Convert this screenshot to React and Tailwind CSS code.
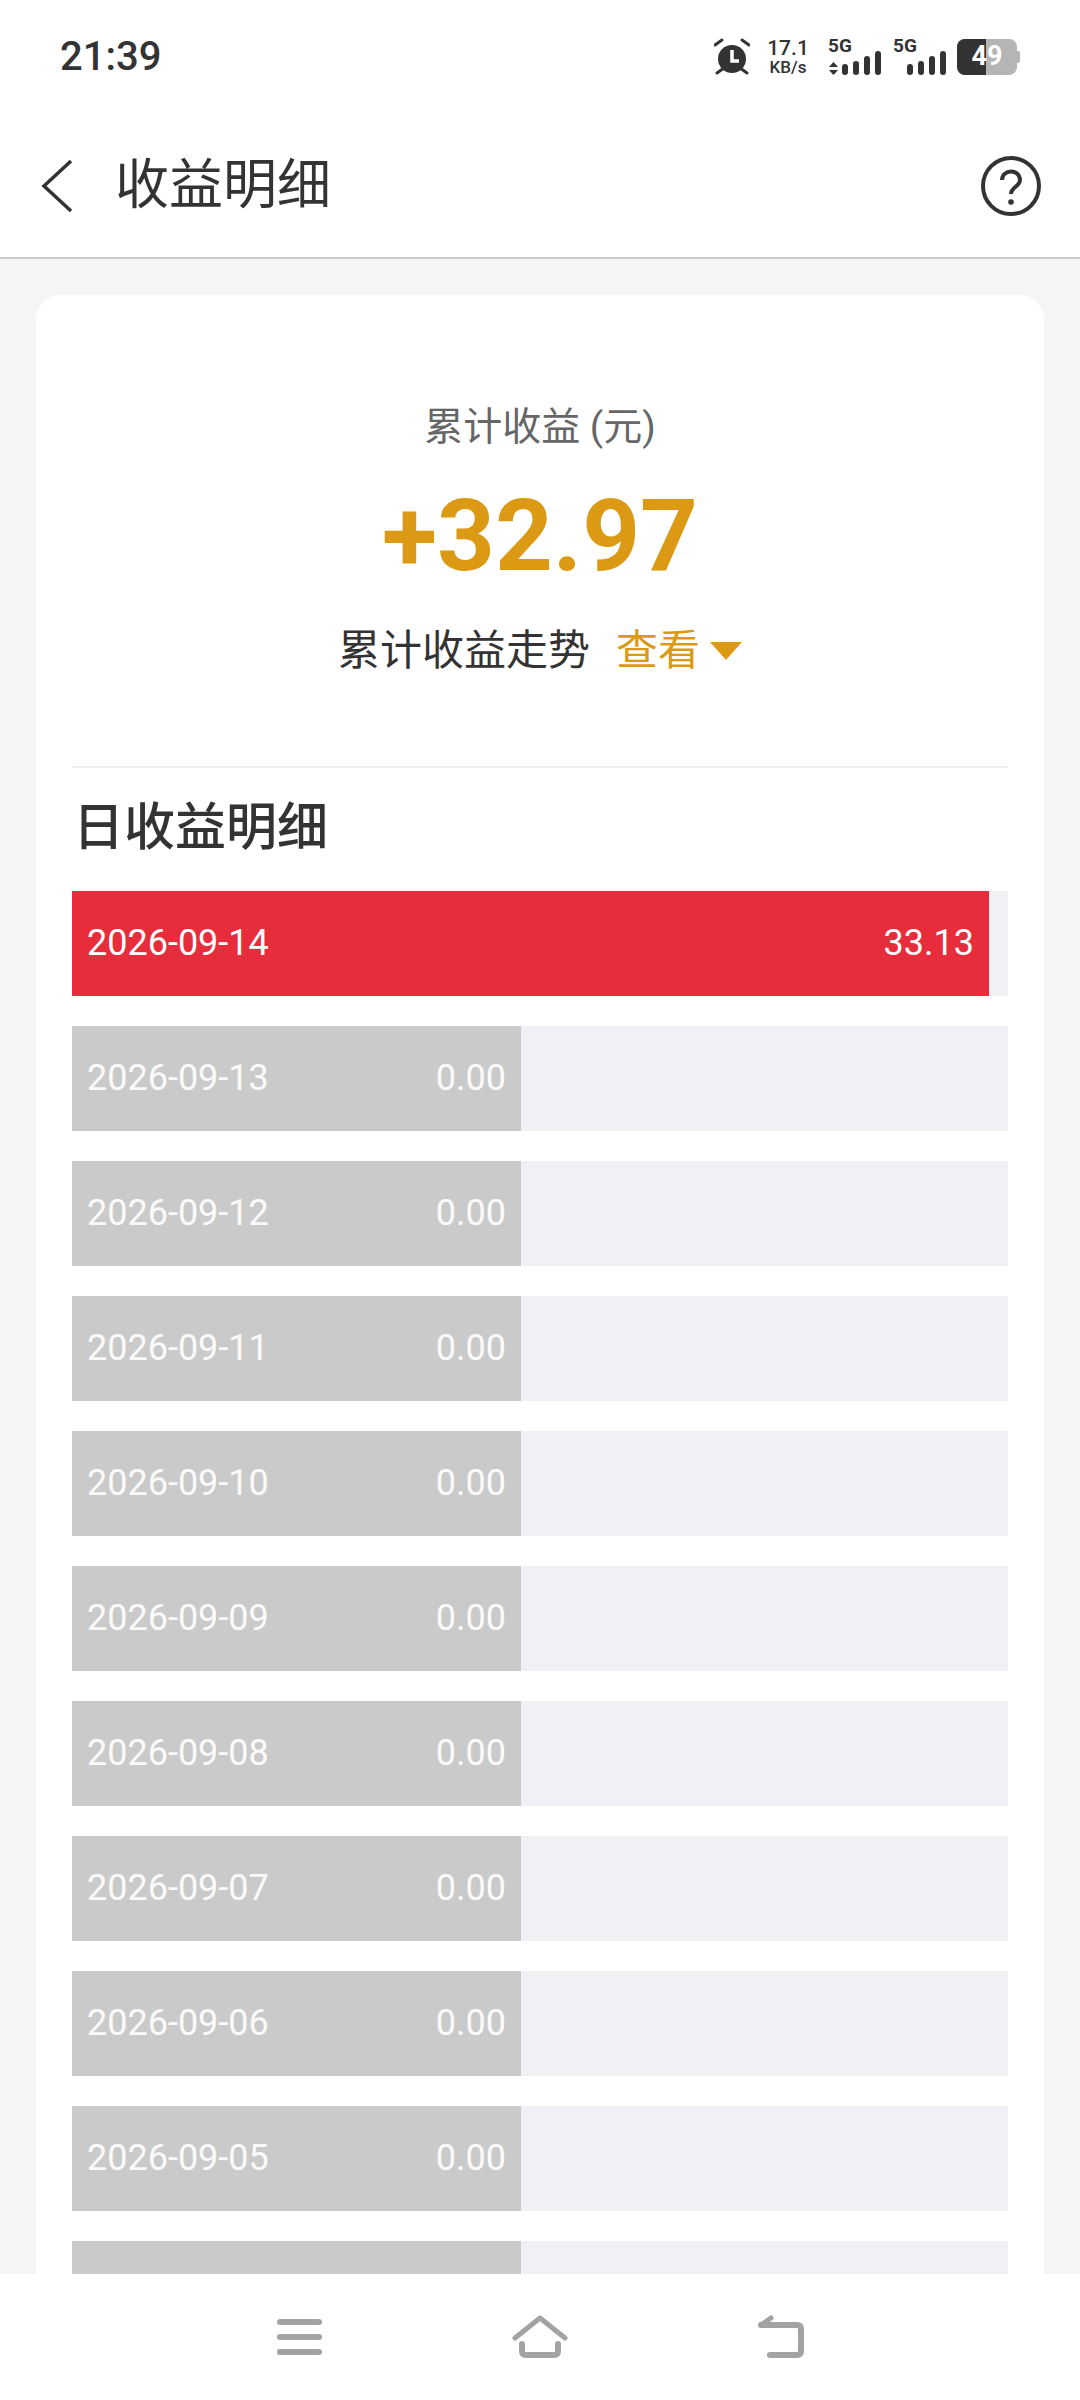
const font = "font-['Roboto','Noto_Sans_CJK_SC',sans-serif]";

const rows = [
  { date: "2026-09-14", value: "33.13", hot: true },
  { date: "2026-09-13", value: "0.00" },
  { date: "2026-09-12", value: "0.00" },
  { date: "2026-09-11", value: "0.00" },
  { date: "2026-09-10", value: "0.00" },
  { date: "2026-09-09", value: "0.00" },
  { date: "2026-09-08", value: "0.00" },
  { date: "2026-09-07", value: "0.00" },
  { date: "2026-09-06", value: "0.00" },
  { date: "2026-09-05", value: "0.00" },
  { date: "", value: "" },
];

const Signal = ({ arrows }) => (
  <div className="relative w-[53px] h-[36px]">
    <span className="absolute left-0 top-[-2px] text-[19px] leading-[18px] font-bold text-[#333]">5G</span>
    {arrows && (
      <svg width="9" height="13" viewBox="0 0 9 13" className="absolute left-[1px] bottom-0">
        <path d="M4.500 0L9 5H0zM4.500 13L0 8h9z" fill="#333" />
      </svg>
    )}
    <div className="absolute right-0 bottom-0 flex items-end gap-[5px]">
      {[11, 14, 19, 24].map((h, i) => (
        <div key={i} className="w-[6px] rounded-full bg-[#333]" style={{ height: h }} />
      ))}
    </div>
  </div>
);

const StatusBar = () => (
  <div className="h-[110px] flex items-center justify-between pl-[60px] pr-[60px] pt-[3px]">
    <span className="text-[40px] font-medium text-[#333]">21:39</span>
    <div className="flex items-center">
      <svg width="36" height="37" viewBox="0 0 36 37" fill="none">
        <circle cx="18" cy="21" r="14" fill="#333" />
        <path d="M18 12v11h7" stroke="#fff" strokeWidth="3.500" />
        <path d="M1 7l7-5M35 7l-7-5M3 35l7-5M33 35l-7-5" stroke="#333" strokeWidth="3" strokeLinecap="round" />
      </svg>
      <div className="ml-[18px] w-[40px] flex flex-col items-center text-[#333] font-medium">
        <span className="text-[21px] leading-[21px]">17.1</span>
        <span className="text-[17px] leading-[17px]">KB/s</span>
      </div>
      <div className="ml-[20px]"><Signal arrows /></div>
      <div className="ml-[12px]"><Signal /></div>
      <div className="ml-[11px] flex items-center">
        <div className="relative w-[60px] h-[36px] rounded-[8px] overflow-hidden bg-[#b5b5b5]">
          <div className="w-[29px] h-full bg-[#333]" />
          <span className="absolute inset-0 flex items-center justify-center text-white font-bold text-[27px] leading-none">49</span>
        </div>
        <div className="w-[3px] h-[12px] rounded-r-[2px] bg-[#b5b5b5]" />
      </div>
    </div>
  </div>
);

const Header = () => (
  <div className="h-[149px] pt-[4px] flex items-center justify-between border-b-2 border-[#c9c9c9] pl-[40px] pr-[39px]">
    <div className="flex items-center">
      <svg width="34" height="54" viewBox="0 0 34 54" fill="none" stroke="#333" strokeWidth="3.500">
        <path d="M31 2L4 27l27 25" />
      </svg>
      <span className="ml-[41px] text-[54px] text-[#333] leading-none">收益明细</span>
    </div>
    <svg width="60" height="60" viewBox="0 0 60 60" fill="none">
      <circle cx="30" cy="30" r="28" stroke="#333" strokeWidth="4" />
      <path d="M21 24c0-5 4-8.500 9-8.500s9 3.500 9 8.500c0 6.500-9 7-9 14" stroke="#333" strokeWidth="4" />
      <circle cx="30" cy="46" r="2.800" fill="#333" />
    </svg>
  </div>
);

const Row = ({ date, value, hot }) => (
  <div className="h-[105px] bg-[#f0f0f5] shrink-0">
    <div
      className={`h-full flex items-center justify-between pl-[15px] pr-[15px] pb-[2px] text-[36px] ${hot ? "bg-[#e72c3b] w-[917px] text-white" : "bg-[#cacaca] w-[449px] text-white/90"}`}
    >
      <span>{date}</span>
      <span>{value}</span>
    </div>
  </div>
);

const NavBar = () => (
  <div className="absolute left-0 right-0 bottom-0 h-[126px] bg-white flex items-start justify-center gap-[190px] pt-[41px]">
    <svg width="45" height="44" viewBox="0 0 45 44" fill="#a3a3a3">
      <rect x="0" y="4" width="45" height="6" rx="3" />
      <rect x="0" y="19" width="45" height="6" rx="3" />
      <rect x="0" y="34" width="45" height="6" rx="3" />
    </svg>
    <svg width="56" height="44" viewBox="0 0 56 44" fill="none" stroke="#a3a3a3" strokeWidth="6" strokeLinecap="round" strokeLinejoin="round">
      <path d="M3 23L28 3l25 20" strokeWidth="5" />
      <path d="M10 29v7q0 4 4 4h28q4 0 4-4v-7" />
    </svg>
    <svg width="46" height="44" viewBox="0 0 46 44" fill="none" stroke="#a3a3a3" strokeWidth="6" strokeLinecap="round" strokeLinejoin="round">
      <path d="M3 10h36q4 0 4 4v22q0 4-4 4H12" />
      <path d="M3 10l10-7" strokeWidth="5" />
    </svg>
  </div>
);

export default function App() {
  return (
    <div className={`relative w-[1080px] h-[2400px] overflow-hidden bg-[#f5f5f5] ${font}`}>
      <div className="bg-white">
        <StatusBar />
        <Header />
      </div>
      <div className="mt-[36px] mx-[36px] bg-white rounded-t-[24px] px-[36px]">
        <div className="h-[473px] flex flex-col items-center border-b-2 border-[#eeeeee]">
          <div className="mt-[110px] text-[39px] leading-[44px] text-[#666]">累计收益 (元)</div>
          <div className="mt-[32px] text-[101px] leading-[110px] font-bold text-[#dc9a14]">+32.97</div>
          <div className="mt-[36px] flex items-center text-[42px] leading-[48px] text-[#333]">
            <span>累计收益走势</span>
            <span className="ml-[26px] text-[#dc9a14]">查看</span>
            <span className="ml-[10px] w-0 h-0 border-l-[16px] border-r-[16px] border-t-[18px] border-l-transparent border-r-transparent border-t-[#dc9a14]" />
          </div>
        </div>
        <div className="h-[123px] pb-[2px] flex items-center pl-[1px] text-[51px] font-medium text-[#333]">日收益明细</div>
        <div className="flex flex-col gap-[30px]">
          {rows.map((r, i) => (
            <Row key={i} {...r} />
          ))}
        </div>
      </div>
      <NavBar />
    </div>
  );
}
